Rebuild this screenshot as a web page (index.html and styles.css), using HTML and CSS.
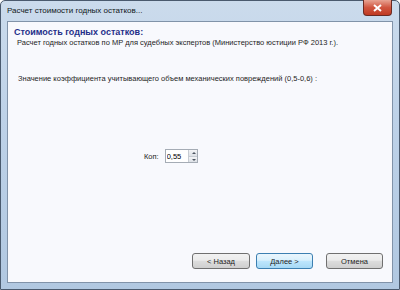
FILE: index.html
```html
<!DOCTYPE html>
<html lang="ru">
<head>
  <meta charset="UTF-8">
  <title>Расчет стоимости годных остатков</title>
  <link rel="stylesheet" href="styles.css">
</head>
<body>
  <div class="window">
    <!-- Заголовок окна -->
    <div class="titlebar">
      <span class="title">Расчет стоимости годных остатков...</span>
      <div class="close">
        <svg width="9" height="8" viewBox="0 0 9 8">
          <path d="M1 1 L8 7 M8 1 L1 7" stroke="#fff" stroke-width="2"/>
        </svg>
      </div>
    </div>

    <div class="client">
      <div class="header">
        <h2>Стоимость годных остатков:</h2>
        <p>Расчет годных остатков по МР для судебных экспертов (Министерство юстиции РФ 2013 г.).</p>
      </div>

      <div class="content">
        <p class="hint">Значение коэффициента учитывающего объем механических повреждений (0,5-0,6) :</p>
        <div class="field">
          <label for="kop">Коп:</label>
          <div class="spin">
            <input id="kop" value="0,55">
            <div class="arrows">
              <span class="up"></span>
              <span class="down"></span>
            </div>
          </div>
        </div>
      </div>

      <!-- Кнопки мастера -->
      <div class="buttons">
        <button>&lt; Назад</button>
        <button class="default">Далее &gt;</button>
        <button class="cancel">Отмена</button>
      </div>
    </div>
  </div>
</body>
</html>
```

FILE: styles.css
```css
body {
  margin: 0;
  width: 400px;
  height: 290px;
  overflow: hidden;
  font-family: 'Liberation Sans', Arial, sans-serif;
  font-size: 8px;
  color: #1e1e1e;
}
.window {
  box-sizing: border-box;
  width: 400px;
  height: 290px;
  border: 1px solid #4a5a6e;
  border-radius: 5px 5px 0 0;
  background: linear-gradient(to bottom, #cbdbec, #bed2e8 40%, #b1c8e1);
  padding: 0 6px 6px 6px;
  display: flex;
  flex-direction: column;
}
.titlebar {
  height: 20px;
  display: flex;
  justify-content: space-between;
  align-items: flex-start;
}
.title {
  font-size: 8px;
  color: #101820;
  margin-top: 5px;
}
.close {
  width: 29px;
  height: 16px;
  margin-right: 1px;
  margin-top: -1px;
  border: 1px solid #6b2a22;
  border-top: none;
  border-radius: 0 0 4px 4px;
  background: linear-gradient(to bottom, #e8a493, #d0553f 50%, #c03a22);
  display: flex;
  align-items: center;
  justify-content: center;
  box-sizing: border-box;
}
.client {
  flex: 1;
  border: 1px solid #8193a9;
  background: #f8f9fd;
  display: flex;
  flex-direction: column;
}
.header {
  padding: 5px 6px 0 6px;
}
.header h2 {
  margin: 0;
  font-size: 9px;
  color: #1f2f8a;
  font-weight: bold;
}
.header p {
  margin: 1px 0 0 3px;
  font-size: 7.5px;
}
.content {
  flex: 1;
  padding: 0 10px;
}
.hint {
  margin: 27px 0 0 0;
  font-size: 7.5px;
}
.field {
  display: flex;
  align-items: center;
  margin: 66px 0 0 126px;
  gap: 6px;
}
.field label {
  font-size: 7.5px;
}
.spin {
  display: flex;
  border: 1px solid #a5acb5;
  background: #fff;
  height: 14px;
  width: 33px;
  box-sizing: border-box;
}
.spin input {
  border: none;
  width: 21px;
  padding: 0 0 0 1px;
  font: inherit;
  font-size: 7.5px;
  background: transparent;
  outline: none;
}
.arrows {
  display: flex;
  flex-direction: column;
  width: 10px;
  border-left: 1px solid #c7ccd3;
}
.arrows span {
  flex: 1;
  background: linear-gradient(to bottom, #f3f4f6, #dde1e6);
  position: relative;
}
.arrows .up {
  border-bottom: 1px solid #c7ccd3;
}
.arrows .up::after,
.arrows .down::after {
  content: '';
  position: absolute;
  left: 3px;
  top: 2px;
  border-left: 2px solid transparent;
  border-right: 2px solid transparent;
}
.arrows .up::after {
  border-bottom: 2px solid #4c5460;
}
.arrows .down::after {
  border-top: 2px solid #4c5460;
}
.buttons {
  display: flex;
  justify-content: flex-end;
  padding: 0 9px 13px 0;
  gap: 6px;
}
.buttons button {
  width: 58px;
  height: 16px;
  font-family: inherit;
  font-size: 7.5px;
  color: #1e1e1e;
  border: 1px solid #707070;
  border-radius: 3px;
  background: linear-gradient(to bottom, #f2f2f2, #ebebeb 45%, #dddddd 50%, #cfcfcf);
  padding: 0;
}
.buttons .default {
  width: 57px;
  border-color: #3c7fb1;
  background: linear-gradient(to bottom, #eaf6fd, #d9f0fc 45%, #bee6fd 50%, #a7d9f5);
}
.buttons .cancel {
  margin-left: 7px;
  width: 57px;
}
```
